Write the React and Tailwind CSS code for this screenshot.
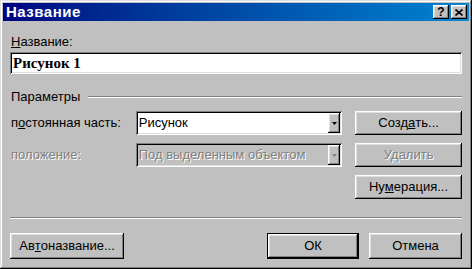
import React from 'react';

const raised =
  'shadow-[inset_-1px_-1px_#000,inset_1px_1px_#fff,inset_-2px_-2px_#808080,inset_2px_2px_#dfdfdf]';
const sunken =
  'shadow-[inset_1px_1px_#808080,inset_-1px_-1px_#fff,inset_2px_2px_#000,inset_-2px_-2px_#dfdfdf]';

const Button = ({ children, disabled, isDefault, className = '' }) => (
  <div
    className={`flex items-center justify-center bg-[#c0c0c0] ${className} ${
      isDefault ? 'border border-black' : ''
    }`}
  >
    <div
      className={`flex h-full w-full items-center justify-center ${raised} ${
        disabled ? 'text-[#808080] [text-shadow:1px_1px_0_#fff]' : 'text-black'
      }`}
    >
      {children}
    </div>
  </div>
);

const Combo = ({ value, disabled }) => (
  <div
    className={`flex h-full w-[207px] items-center p-[2px] ${sunken} ${
      disabled ? 'bg-[#c0c0c0]' : 'bg-white'
    }`}
  >
    <span
      className={`flex-1 pl-[1px] ${
        disabled ? 'text-[#808080] [text-shadow:1px_1px_0_#fff]' : 'text-black'
      }`}
    >
      {value}
    </span>
    <div className={`flex h-full w-[12px] items-center justify-center bg-[#c0c0c0] ${raised}`}>
      <svg width="5" height="3" viewBox="0 0 5 3">
        <path d="M0 0h5L2.5 3z" fill={disabled ? '#808080' : '#000'} />
      </svg>
    </div>
  </div>
);

const App = () => {
  return (
    <div
      className="flex h-[269px] w-[472px] flex-col bg-[#c0c0c0] p-[3px] text-[13px] text-black shadow-[inset_-1px_-1px_#000,inset_1px_1px_#dfdfdf,inset_-2px_-2px_#808080,inset_2px_2px_#fff]"
      style={{ fontFamily: '"Liberation Sans", Arial, sans-serif' }}
    >
      {/* title bar */}
      <div className="flex h-[18px] items-center bg-linear-to-r from-[#000080] to-[#1084d0] pl-[3px] pr-[2px]">
        <span className="flex-1 text-[15px] leading-[18px] font-bold tracking-[0.5px] text-white">
          Название
        </span>
        <div className={`flex h-[14px] w-[16px] items-center justify-center bg-[#c0c0c0] text-[12px] leading-none font-bold ${raised}`}>
          ?
        </div>
        <div className={`ml-[2px] flex h-[14px] w-[16px] items-center justify-center bg-[#c0c0c0] ${raised}`}>
          <svg width="8" height="7" viewBox="0 0 8 7">
            <path d="M0.5 0.5L7.5 6.5M7.5 0.5L0.5 6.5" stroke="#000" strokeWidth="1.6" />
          </svg>
        </div>
      </div>

      <div className="flex flex-1 flex-col px-[7px]">
        <div className="mt-[13px] h-[16px] pl-[1px] leading-[16px]">
          <u>Н</u>азвание:
        </div>
        <div className={`mt-[2px] flex h-[22px] items-center bg-white px-[3px] ${sunken}`}>
          <span
            className="text-[15px] font-bold"
            style={{ fontFamily: '"Liberation Serif", "Times New Roman", serif' }}
          >
            Рисунок 1
          </span>
        </div>

        <div className="mt-[16px] flex h-[14px] items-center pl-[1px]">
          <span className="leading-[14px]">Параметры</span>
          <div className="ml-[8px] h-[2px] flex-1 border-t border-b border-t-[#808080] border-b-white" />
        </div>

        <div className="mt-[7px] flex h-[24px] items-center">
          <span className="w-[126px] pl-[1px]">
            п<u>о</u>стоянная часть:
          </span>
          <Combo value="Рисунок" />
          <Button className="ml-[13px] h-full w-[107px]">
            Созд<u>а</u>ть...
          </Button>
        </div>

        <div className="mt-[8px] flex h-[24px] items-center">
          <span className="w-[126px] pl-[1px] text-[#808080] [text-shadow:1px_1px_0_#fff]">
            положение:
          </span>
          <Combo value="Под выделенным объектом" disabled />
          <Button disabled className="ml-[13px] h-full w-[107px]">
            Удалить
          </Button>
        </div>

        <div className="mt-[8px] flex h-[24px] justify-end">
          <Button className="h-full w-[107px]">
            Ну<u>м</u>ерация...
          </Button>
        </div>

        <div className="mt-[18px] h-[2px] border-t border-b border-t-[#808080] border-b-white" />

        <div className="mt-[14px] flex h-[26px]">
          <Button className="h-full w-[114px]">
            Ав<u>т</u>оназвание...
          </Button>
          <div className="flex-1" />
          <Button isDefault className="h-full w-[92px]">
            ОК
          </Button>
          <Button className="ml-[10px] h-full w-[93px]">Отмена</Button>
        </div>
      </div>
    </div>
  );
};

export default App;
